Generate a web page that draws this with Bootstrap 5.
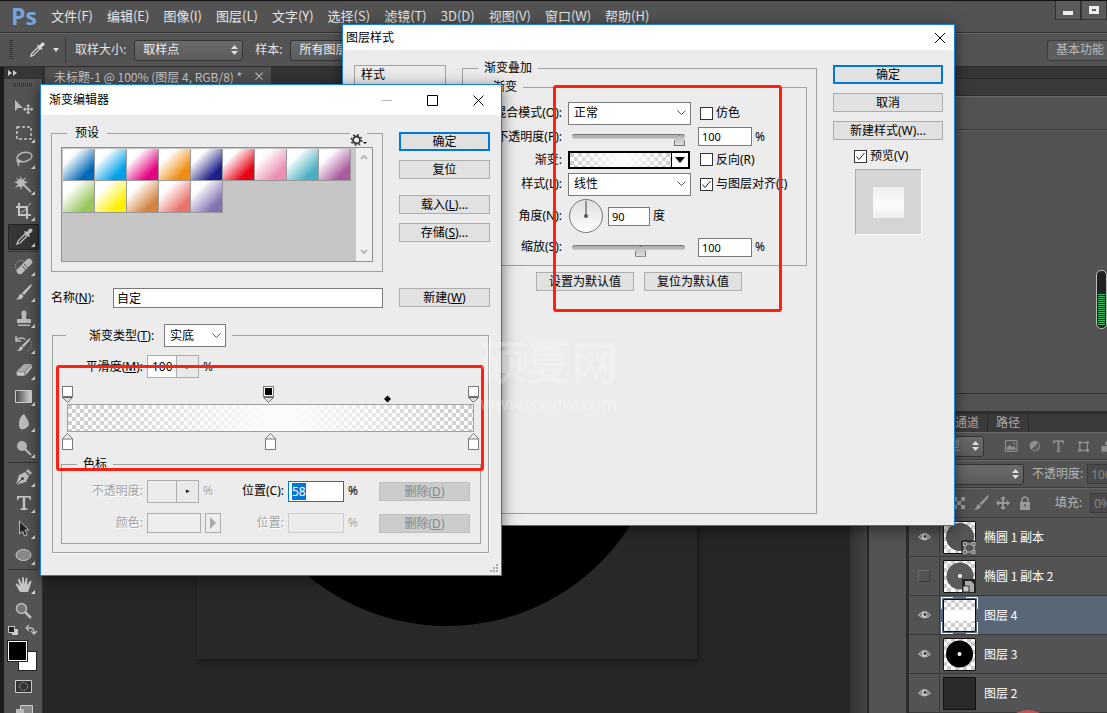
<!DOCTYPE html>
<html lang="zh-CN">
<head>
<meta charset="utf-8">
<meta name="viewport" content="width=device-width, initial-scale=1">
<title>Ps - 未标题-1</title>
<link href="https://cdn.jsdelivr.net/npm/bootstrap@5.3.0/dist/css/bootstrap.min.css" rel="stylesheet">
<style>
:root{--panel:#535353;--line:#383838;--lite:#686868;--win:#ececec;--etch:#a0a0a0;--blue:#0078d7}
body{font-family:"Noto Sans","Noto Sans CJK SC",sans-serif;font-size:12px;line-height:16px;color:#000;background:var(--panel)}
button,input,select{font:inherit;color:inherit}
.app{height:100vh;background:var(--panel);color:#e4e4e4}
.app svg{display:block;flex:none}
/* menu and options bars */
.menubar{height:33px;border-top:1px solid #111;border-bottom:1px solid #333;padding:0 0 2px 11px}
.logo{color:#78a5d8;font:bold 23px/28px "Open Sans",sans-serif;width:40px}
.menubar a{font:13px/18px "Noto Sans CJK SC",sans-serif;color:#e6e6e6;text-decoration:none}
.winbtns{align-self:flex-start}
.winbtns button{width:26px;height:19px;background:#5b5b5b;border:1px solid #333;border-top:0;padding:0}
.optbar{height:34px;border-top:1px solid var(--lite);border-bottom:1px solid #2e2e2e;padding-left:9px;background:var(--panel)}
.grip{width:4px;height:20px;background:repeating-linear-gradient(#333 0 1px,#5a5a5a 1px 2px)}
.dsel{appearance:none;height:21px;border:1px solid #333;border-radius:3px;padding:0 8px;line-height:18px;color:#f0f0f0;background:url("data:image/svg+xml,%3Csvg xmlns='http://www.w3.org/2000/svg' width='7' height='10'%3E%3Cpath d='M0 4 3.500 0 7 4zM0 6 3.500 10 7 6z' fill='%23ddd'/%3E%3C/svg%3E") no-repeat right 4px center,linear-gradient(#6b6b6b,#5b5b5b)}
.prow .dsel{color:#aaa}
.workspace{height:21px;width:60px;border:1px solid #3c3c3c;border-right:0;border-radius:3px 0 0 3px;background:#5d5d5d;color:#b8b8b8;padding:0 8px;white-space:nowrap;line-height:18px}
/* tool strip */
.tools{width:43px;border-left:4px solid #1c1c1c;border-right:1px solid #2c2c2c;background:var(--panel)}
.tools>header{height:12px;background:#363636;color:#ccc}
.tools .hgrip{width:20px;height:4px;margin:4px auto 7px;background:repeating-linear-gradient(90deg,#333 0 1px,#5a5a5a 1px 2px)}
.tool{position:relative;display:flex;align-items:center;justify-content:center;height:26px;width:31px;margin-left:4px;padding:0;border:0;background:none;color:#c4c4c4}
.tool.more::after{content:"";position:absolute;right:4px;bottom:3px;width:4px;height:4px;background:#ddd;clip-path:polygon(100% 0,100% 100%,0 100%)}
.tool.on{background:#353535;box-shadow:inset 0 0 0 1px #222;border-radius:2px}
.tools hr{height:1px;margin:1px 4px;background:#333;border:0;opacity:1}
.chips{height:32px;width:31px;display:grid;grid-template:10px 10px 10px/10px 9px 10px;margin-left:4px}
.fg{grid-area:1/1/3/3;background:#000;border:1px solid #fff;outline:1px solid #222;z-index:1}
.bg2{grid-area:2/2/4/4;background:#fff;border:1px solid #222}
/* document area */
.tabs{height:18px;background:#333}
.doctab{width:226px;height:18px;margin-left:2px;padding:0 6px 0 9px;background:#505050;color:#c8c8c8;font:12px/19px "Noto Sans CJK SC",sans-serif;white-space:nowrap}
.doctab button{border:0;padding:0;background:none;line-height:18px}
.stage{background:#262626;padding-top:74px;overflow:hidden}
.page{width:500px;height:500px;margin:0 auto;background:#282828;box-shadow:1px 2px 4px #151515}
.disc{width:434px;height:434px;border-radius:50%;background:#000}
.vscroll{width:19px;background:linear-gradient(90deg,#333,#444);border-right:2px solid #262626}
.dock{width:40px;border-right:3px solid #2c2c2c}
.panels{width:198px}
.panels .row1{height:12px;background:#353535;border-bottom:1px solid #292929}
.panels .row2{height:17px;background:#3a3a3a;border-bottom:1px solid #2c2c2c}
.panels .row3{height:34px;border-bottom:1px solid #3a3a3a;border-top:1px solid var(--lite)}
.panels .row4{height:264px;border-bottom:1px solid #333;border-top:1px solid #606060}
.meter{width:11px;height:59px;margin-top:139px;border:1px solid #bbb;border-radius:5px;padding:23px 1px 2px;background:#222}
.meter i{display:block;height:100%;background:repeating-linear-gradient(#3dbb6b 0 1px,#222 1px 2px)}
.panels .row5{height:20px;border-bottom:3px solid #2f2f2f}
.ptabs{height:18px;background:#3a3a3a;color:#aaa;padding-left:46px;line-height:18px}
.ptabs a{color:#aaa;text-decoration:none;padding:0 8px 0 0;margin-right:8px;border-right:1px solid #2c2c2c}
.prow{height:28px;border-top:1px solid var(--lite);border-bottom:1px solid #3d3d3d;white-space:nowrap;color:#b4b4b4;overflow:hidden}
.dnum{width:50px;height:20px;border:1px solid #3a3a3a;background:#4a4a4a;color:#858585;padding:0 3px}
.layer{height:39px;border-bottom:1px solid #383838;color:#fff}
.layer .eye{width:31px;border-right:1px solid #3b3b3b;color:#b8b8b8}
.layer.sel .nm{background:#596678}
.nm{padding-left:3px;font-family:"Noto Sans CJK SC",sans-serif}
.hidebox{width:12px;height:12px;border:1px solid #3c3c3c;border-top-color:#6a6a6a;border-left-color:#6a6a6a}
.redspot{left:1003px;top:710px;width:50px;height:50px;border-radius:50%;background:#c05656}
/* windows */
.win{position:absolute;border:1px solid #1a7fd6;background:var(--win);color:#000;box-shadow:0 3px 14px rgba(0,0,0,.55)}
.win svg{display:block}
.w1{left:342px;top:24px;width:613px;height:502px}
.w2{left:40px;top:84px;width:462px;height:492px}
.win .ttl{background:#fff;padding-left:3px}
.win .ttl button{border:0;background:none;padding:0}
.win fieldset{border:1px solid var(--etch);padding:0;margin:0;min-width:0}
.win legend{float:none;width:auto;font-size:12px;line-height:16px;margin:0 0 0 15px;padding:0 6px}
.wb{display:block;width:100%;height:19px;padding:0;border:1px solid #adadad;background:#e1e1e1;line-height:18px;text-align:center;white-space:nowrap}
.wb.def{border:2px solid var(--blue);line-height:16px}
.wb:disabled{background:#ccc;border-color:#bfbfbf;color:#858585}
.wsel{appearance:none;border:1px solid #7a7a7a;border-radius:0;background:#fff url("data:image/svg+xml,%3Csvg xmlns='http://www.w3.org/2000/svg' width='9' height='6'%3E%3Cpath d='M.5 .5 4.500 4.500 8.500 .5' fill='none' stroke='%23555'/%3E%3C/svg%3E") no-repeat right 4px center;height:23px;padding:0 5px;line-height:20px}
.wi{border:1px solid #7a7a7a;background:#fff;height:19px;padding:0 3px;border-radius:0;min-width:0;font-size:11px}
.wi:focus{outline:0}
.wi::selection{background:#0078d7;color:#fff}
.ck{appearance:none;flex:none;width:13px;height:13px;margin:0 3px 0 0;border:1px solid #333;background:#fff}
.ck:checked{background:#fff url("data:image/svg+xml,%3Csvg xmlns='http://www.w3.org/2000/svg' width='11' height='11'%3E%3Cpath d='M1.500 5.500 4 8.500 9.500 2' fill='none' stroke='%23222'/%3E%3C/svg%3E") center}
.cols{display:grid;grid-template-columns:92px minmax(0,1fr) 110px;gap:16px;padding:10px 11px}
.stylelist{border:1px solid var(--etch);margin-top:5px;padding:1px 6px}
.form1{display:grid;grid-template-columns:70px 123px 1fr;grid-template-rows:24px 23px 23px 26px 38px 24px;column-gap:6px;align-items:center;padding:6px 0;white-space:nowrap}
.form1>label,.form1>span:first-child{justify-self:end}
.third{display:flex;align-items:center;padding-left:3px}
.rng{appearance:none;width:113px;height:18px;margin:0 0 0 4px;background:none;display:block}
.rng::-webkit-slider-runnable-track{height:5px;border-radius:3px;background:#b4b4b4;border-top:1px solid #777;border-bottom:1px solid #ccc}
.rng::-webkit-slider-thumb{appearance:none;width:11px;height:11px;margin-top:0;background:linear-gradient(#bbb,#ddd) padding-box,#777;border:1px solid #777;clip-path:polygon(50% 0,100% 55%,100% 100%,0 100%,0 55%)}
.checker{background:linear-gradient(90deg,rgba(253,250,252,0),rgba(253,250,252,1) 50%,rgba(253,250,252,1) 55%,rgba(253,250,252,0)),repeating-conic-gradient(#fff 0 25%,#ccc 0 50%) 0 0/8px 8px}
.grad{width:122px;height:18px;border:2px solid #000;padding:0;display:flex}
.grad .checker{flex:1}
.grad b{width:17px;border-left:1px solid #000;background:#fff;display:flex;align-items:center;justify-content:center}
.pv{width:67px;height:66px;margin:5px 0 0 22px;border:1px solid #aaa;border-bottom-color:#fff;border-right-color:#fafafa;background:#d5d5d5}
.pv i{width:31px;height:31px;background:linear-gradient(#efefef,#fcfafc 60%,#eee)}
.redbox{position:absolute;border:3px solid #ff2012;border-radius:3px;pointer-events:none}
.r1{left:553px;top:85px;width:229px;height:227px}
.r2{left:56px;top:365px;width:428px;height:106px}
.body2{display:grid;grid-template-columns:332px 91px;column-gap:16px;padding:10px 10px 0}
.swlist{margin:6px 9px 9px;height:115px;border:1px solid #919191;background:#c6c6c6}
.sw{display:grid;grid-template-columns:repeat(9,32px);grid-auto-rows:32px;align-content:start;flex:1;padding:1px 0 0 1px}
.sw button{border:solid #999;border-width:0 1px 1px 0;padding:0;background:linear-gradient(135deg,#fff 25%,var(--c) 78%)}
.vs{width:16px;background:#f0f0f0;padding:6px 0}
.win .etched{grid-column:1/3;margin:16px 0 0 1px;width:437px;height:229px;box-shadow:1px 1px 0 #fff}
.line{display:grid;align-items:center;white-space:nowrap}
.spin{display:flex;width:52px;height:23px;border:1px solid #adadad;background:#f0f0f0}
.spin input{width:29px;border:0;border-right:1px solid #adadad;padding:0 4px;background:#fff;font-size:12px}
.spin button{flex:1;border:0;background:#e9e9e9;padding:0;font-size:7px;line-height:8px}
.dim{color:#a3a3a3;text-shadow:1px 1px 0 #fff}
.stops{margin:8px 9px 0}
.bar{height:28px;border:1px solid var(--etch);margin:1px 5px}
.wm{left:480px;top:333px;width:152px;color:rgba(255,255,255,.22);pointer-events:none}
.wm b{display:block;font:bold 46px/52px "Noto Sans CJK SC",sans-serif}
.wm span{display:block;margin-top:7px;font:bold 17px/24px "Open Sans",sans-serif}
</style>
</head>
<body class="overflow-hidden">
<svg class="d-none">
  <symbol id="eye" viewBox="0 0 13 10"><path d="M.5 5Q6.500-2 12.500 5 6.500 11 .5 5z" fill="#777" stroke="#bbb"/><circle cx="6.500" cy="4.800" r="2.800" fill="#ccc"/><circle cx="7" cy="4.500" r="1.400" fill="#333"/></symbol>
  <symbol id="dropper" viewBox="0 0 18 18"><path d="M2 16 3 13 10 6 12 8 5 15z" fill="none" stroke="currentColor" stroke-width="1.300"/><path d="m9 4 1-1 2 1 2-3q2-1 3 0t0 3l-3 2 1 2-1 1z" fill="currentColor"/></symbol>
  <symbol id="brush" viewBox="0 0 18 18"><path d="M17 1 16 4 9 12 7 10 15 2zM6 10.500 8.500 13Q7 17 1 16.500 4 15 4 12.500z" fill="currentColor"/></symbol>
  <symbol id="move4" viewBox="0 0 14 14"><path d="m7 0 3 3H8v3h3V4l3 3-3 3V8H8v3h2l-3 3-3-3h2V8H3v2L0 7l3-3v2h3V3H4z" fill="currentColor"/></symbol>
  <symbol id="top-stop" viewBox="0 0 11 17"><path d="M.5.5h10v11l-5 5-5-5z" fill="#ddd" stroke="#777"/><path d="M.5.5h10v10H.5z" fill="#fff" stroke="#777"/><path d="M1 11.500h9" stroke="#666"/></symbol>
  <symbol id="bot-stop" viewBox="0 0 11 17"><path d="m5.500.5 5 5v11H.5v-11z" fill="#eee" stroke="#777"/><path d="M.5 6h10v10.500H.5z" fill="#fff" stroke="#777"/></symbol>
</svg>
<div class="app d-flex flex-column position-relative overflow-hidden">
  <nav class="menubar d-flex align-items-center flex-shrink-0">
    <span class="logo">Ps</span>
    <div class="d-flex flex-grow-1" style="gap:14px">
      <a href="#">文件(F)</a><a href="#">编辑(E)</a><a href="#">图像(I)</a><a href="#">图层(L)</a><a href="#">文字(Y)</a><a href="#">选择(S)</a><a href="#">滤镜(T)</a><a href="#">3D(D)</a><a href="#">视图(V)</a><a href="#">窗口(W)</a><a href="#">帮助(H)</a>
    </div>
    <div class="winbtns d-flex flex-shrink-0">
      <button aria-label="最小化"><svg class="mx-auto" width="10" height="10"><path d="M0 6h10v4H0z" fill="#eee"/></svg></button>
      <button aria-label="最大化"><svg class="mx-auto" width="10" height="9"><path d="M1.500 1.500h7v5h-7z" fill="none" stroke="#eee" stroke-width="3"/></svg></button>
    </div>
  </nav>
  <div class="optbar d-flex align-items-center flex-shrink-0">
    <span class="grip"></span>
    <svg class="ms-3" width="16" height="16" style="color:#ddd"><use href="#dropper"/></svg>
    <svg class="ms-2" width="14" height="26"><path d="M0 11h6l-3 4z" fill="#ddd"/><path d="M12.500 0v26" stroke="#3a3a3a"/></svg>
    <label class="ms-2 me-2 flex-shrink-0" for="ss">取样大小:</label>
    <select id="ss" class="dsel" style="width:109px"><option>取样点</option></select>
    <label class="ms-2 ps-1 me-2 flex-shrink-0" for="sp">样本:</label>
    <select id="sp" class="dsel" style="width:109px"><option>所有图层</option></select>
    <button class="workspace ms-auto">基本功能</button>
  </div>
  <div class="d-flex flex-grow-1 overflow-hidden">
    <aside class="tools flex-shrink-0">
      <header><svg class="ms-1" width="9" height="10"><path d="M0 3l4 3-4 3zM5 3l4 3-4 3z" fill="#ccc"/></svg></header>
      <div class="hgrip"></div>
      <button class="tool" aria-label="移动"><svg width="20" height="16" viewBox="0 0 20 16"><path d="M1 1v11l3-3h5z" fill="#bbb"/><g transform="translate(9 5) scale(.75)"><use href="#move4" width="14" height="14"/></g></svg></button>
      <button class="tool more" aria-label="选框"><svg width="16" height="14"><path d="M1 1h14v12H1z" fill="none" stroke="#ccc" stroke-width="1.500" stroke-dasharray="3 2"/></svg></button>
      <button class="tool more" aria-label="套索"><svg width="18" height="16" fill="none" stroke="#bbb" stroke-width="1.500"><ellipse cx="9.500" cy="6" rx="7.500" ry="4.500" transform="rotate(-12 9.500 6)"/><path d="M3 8q-2 3 1 3t0-2q-2 1 0 6"/></svg></button>
      <button class="tool more" aria-label="魔棒"><svg width="19" height="18"><path d="M7 0 8 4 12 1 10 5 14 6 10 8 12 11 8 10 7 14 5.500 10 1 12 4 8 0 6 4 5 2 1 5.500 4z" fill="#bbb"/><path d="m9 8 8 8" stroke="#bbb" stroke-width="2"/></svg></button>
      <button class="tool more" aria-label="裁剪"><svg width="17" height="17" fill="none" stroke="#c8c8c8" stroke-width="2"><path d="M4 0v12h12M1 4h11v12"/><path d="M13 3l3-3M6 10l6-5" stroke-width="1"/></svg></button>
      <button class="tool more on" aria-label="吸管"><svg width="18" height="18"><use href="#dropper"/></svg></button>
      <hr>
      <button class="tool more" aria-label="修复"><svg width="20" height="18"><circle cx="7" cy="9" r="5.500" fill="none" stroke="#bbb" stroke-dasharray="1 1.500"/><path d="m6 14 9-9" stroke="#bbb" stroke-width="6.500" stroke-linecap="round"/><path d="m8 9 4 4M10 7l4 4" stroke="#555"/></svg></button>
      <button class="tool more" aria-label="画笔"><svg width="18" height="18"><use href="#brush"/></svg></button>
      <button class="tool more" aria-label="图章"><svg width="16" height="17"><path d="M6 7Q4 1 8 .5 12 1 10 7l.5 2H15v4H1V9h4.500zM2 14.500h12V16H2z" fill="#bbb"/></svg></button>
      <button class="tool more" aria-label="历史记录"><svg width="18" height="17"><g transform="translate(1 1) scale(.85)"><use href="#brush" width="18" height="18"/></g><path d="M1.500 3.500q5-3 9 0M1 0v5h5" fill="none" stroke="#bbb" stroke-width="1.500"/><path d="M16.500 5q1 8-5 10" stroke="#bbb" fill="none" stroke-dasharray="1 1.500"/></svg></button>
      <button class="tool more" aria-label="橡皮擦"><svg width="18" height="14"><path d="m1 9 8-8h8L10 9z" fill="#aaa"/><path d="m1 9 9 0v4H2zM10 9l7-8v4l-7 8z" fill="#ccc" stroke="#555" stroke-width=".5"/></svg></button>
      <button class="tool more" aria-label="渐变"><svg width="17" height="13"><defs><linearGradient id="gg"><stop stop-color="#444"/><stop offset="1" stop-color="#ddd"/></linearGradient></defs><path d="M.5.5h16v12H.5z" fill="url(#gg)" stroke="#ccc"/></svg></button>
      <button class="tool more" aria-label="模糊"><svg width="12" height="16"><path d="M6 0q5 7 5 10t-5 5-5-5 5-10z" fill="#bbb"/></svg></button>
      <button class="tool more" aria-label="减淡"><svg width="16" height="16"><circle cx="6" cy="6" r="5" fill="#b5b5b5"/><path d="m9 9 6 6" stroke="#bbb" stroke-width="2"/></svg></button>
      <hr>
      <button class="tool more" aria-label="钢笔"><svg width="18" height="18"><path d="M1 17 4 7l6-3 4 4-3 6zM11 3l2-2 4 4-2 2z" fill="#bbb"/><path d="m1 17 6-6" stroke="#444"/><circle cx="7.500" cy="10.500" r="1.500" fill="#444"/></svg></button>
      <button class="tool more" aria-label="文字"><svg width="14" height="14"><path d="M0 0h14v4h-1q0-2.500-3-2.500H8.200V12l2.300.8V14h-7v-1.200l2.300-.8V1.500H4Q1 1.500 1 4H0z" fill="#c4c4c4"/></svg></button>
      <button class="tool more" aria-label="路径选择"><svg width="12" height="18"><path d="M1.500 1v13l3-3 2 5 2.500-1-2-5h4z" fill="#222" stroke="#bbb"/></svg></button>
      <button class="tool more" aria-label="椭圆"><svg width="17" height="14"><ellipse cx="8.500" cy="7" rx="7.500" ry="5.500" fill="#8a8a8a" stroke="#ccc"/></svg></button>
      <hr>
      <button class="tool more" aria-label="抓手"><svg width="18" height="17"><path d="M5 16 1 9q-1-2 1-1.500L5 10 3 4q0-2 1.500-1L7 8V2q1-2 2 0v6l2-6q1.500-1 1.500 1L12 9l3-4q2-1 1.500 1L13 16z" fill="#c4c4c4"/></svg></button>
      <button class="tool" aria-label="缩放"><svg width="17" height="17"><circle cx="6.500" cy="6.500" r="5" fill="#777" stroke="#bbb" stroke-width="1.500"/><path d="m10 10 6 6" stroke="#bbb" stroke-width="2.500"/></svg></button>
      <svg class="ms-1" width="31" height="18"><path d="M4 6h6v6H4z" fill="#ccc"/><path d="M.5 3.500h6v6h-6z" fill="#222" stroke="#ccc"/><path d="M19 5h4q3 0 3 5M21 2l-3 3 3 3M23 8l3 3 3-3" fill="none" stroke="#bbb" stroke-width="1.300"/></svg>
      <div class="chips"><span class="fg"></span><span class="bg2"></span></div>
      <button class="tool" aria-label="快速蒙版"><svg width="17" height="13"><path d="M.5.5h16v12H.5z" fill="#333" stroke="#ccc"/><circle cx="8.500" cy="6.500" r="4" fill="none" stroke="#ddd" stroke-dasharray="1 1.200"/></svg></button>
      <button class="tool" aria-label="屏幕模式"><svg width="18" height="14"><path d="M5.500.5h12v12h-12z" fill="#888" stroke="#ccc"/><path d="M1 4h8v8H1z" fill="#bbb"/></svg></button>
    </aside>
    <main class="d-flex flex-column flex-grow-1 overflow-hidden">
      <div class="tabs flex-shrink-0"><div class="doctab d-flex justify-content-between"><span>未标题-1 @ 100% (图层 4, RGB/8) *</span><button aria-label="关闭">×</button></div></div>
      <div class="d-flex flex-grow-1 overflow-hidden">
        <div class="stage flex-grow-1"><div class="page d-flex align-items-center justify-content-center"><div class="disc"></div></div></div>
        <div class="vscroll flex-shrink-0"></div>
      </div>
    </main>
    <div class="dock flex-shrink-0"></div>
    <aside class="panels flex-shrink-0">
      <div class="row1"></div><div class="row2"></div><div class="row3"></div>
      <div class="row4 d-flex justify-content-end"><div class="meter"><i></i></div></div>
      <div class="row5"></div>
      <div class="ptabs"><a href="#">通道</a><a href="#">路径</a></div>
      <div class="prow d-flex align-items-center">
        <select class="dsel flex-shrink-0" style="width:75px;text-indent:18px" aria-label="筛选类型"><option>类型</option></select>
        <svg class="ms-3 ps-1" width="115" height="16" viewBox="0 0 115 16" fill="#8f8f8f" stroke="none"><path d="M1.500 2.500h12v11h-12z" fill="none" stroke="#999"/><path d="M3 12v-3l3-2 2 2 2-1 2 2v2z"/><circle cx="10.500" cy="5.500" r="1"/><circle cx="32" cy="8" r="5.500"/><path d="m28 12 8-8q2 4-1 7t-7 1z" fill="#5c5c5c"/><path d="M51 2h11v4h-1q0-2.500-2-2.500h-1.500V13h1.500v1h-5v-1h1.500V3.500H54q-2 0-2 2.500h-1z"/><path d="M78.500 4.500h8v8h-8z" fill="none" stroke="#999"/><path d="M77 3h3v3h-3zM85 3h3v3h-3zM77 11h3v3h-3zM85 11h3v3h-3zM101 8h7v6h-7zM105 3h8v4h-8z"/></svg>
      </div>
      <div class="prow d-flex align-items-center">
        <select class="dsel flex-shrink-0" style="width:115px" aria-label="混合模式"><option>正常</option></select>
        <label class="ms-2 me-1" for="op">不透明度:</label><input id="op" class="dnum" value="100%">
      </div>
      <div class="prow d-flex align-items-center" style="height:30px">
        <svg width="134" height="18" viewBox="0 0 134 18" fill="#999"><path d="M44 3h4v4h-4zM52 3h4v4h-4zM48 7h4v4h-4zM44 11h4v4h-4zM52 11h4v4h-4z"/><g style="color:#999"><use href="#brush" x="64" width="17" height="17"/><use href="#move4" x="87" y="2" width="14" height="14"/></g><path d="M111 8h10v8h-10z"/><path d="M113 8V5q3-4 6 0v3" fill="none" stroke="#999" stroke-width="1.500"/><path d="M115.500 10h1v3h-1z" fill="#444"/></svg>
        <label class="ms-2 ps-1 me-1 flex-shrink-0" for="fl">填充:</label><input id="fl" class="dnum ms-1" value="0%">
      </div>
      <div class="layer d-flex"><span class="eye d-flex align-items-center justify-content-center flex-shrink-0"><svg width="13" height="10"><use href="#eye"/></svg></span><span class="nm d-flex align-items-center flex-grow-1"><svg class="me-2" width="33" height="33"><rect width="33" height="33" fill="url(#ckr)"/><circle cx="17" cy="16" r="14" fill="#555"/><path d="M19 33V20h14v13z" fill="#555"/><path d="M19 33V20h14" fill="none" stroke="#111"/><path d="M.5.5h32v19M.5 0v32.500H19" fill="none" stroke="#111"/><path d="M22 23h9v8h-9z" fill="none" stroke="#bbb"/><path d="M20.500 21.500h3v3h-3zM29 21.500h3v3h-3zM20.500 29.500h3v3h-3zM29 29.500h3v3h-3z" fill="#555" stroke="#bbb"/></svg>椭圆 1 副本</span></div>
      <div class="layer d-flex"><span class="eye d-flex align-items-center justify-content-center flex-shrink-0"><span class="hidebox"></span></span><span class="nm d-flex align-items-center flex-grow-1"><svg class="me-2" width="33" height="33"><rect width="33" height="33" fill="url(#ckr)"/><circle cx="17" cy="16" r="13.500" fill="#5a5a5a"/><circle cx="17" cy="16" r="2" fill="#fff"/><path d="M.5.5h32v32H.5z" fill="none" stroke="#111"/><path d="M19 33V19h14v14z" fill="#222"/><path d="M22 21h6l3 3v8h-5v-4h-4z" fill="#aaa"/><path d="M20 26h6v6h-6z" fill="#ccc" stroke="#333"/></svg>椭圆 1 副本 2</span></div>
      <div class="layer sel d-flex"><span class="eye d-flex align-items-center justify-content-center flex-shrink-0"><svg width="13" height="10"><use href="#eye"/></svg></span><span class="nm d-flex align-items-center flex-grow-1"><svg class="me-2 overflow-visible" width="33" height="33"><rect width="33" height="33" fill="url(#ckr)"/><path d="M1 11h31v11H1z" fill="#fff"/><path d="M.5.5h32v32H.5z" fill="none" stroke="#111"/><path d="M-1.500 10V-1.500H10M23-1.500H34.500V10M34.500 23V34.500H23M10 34.500H-1.500V23" fill="none" stroke="#fff"/></svg>图层 4</span></div>
      <div class="layer d-flex"><span class="eye d-flex align-items-center justify-content-center flex-shrink-0"><svg width="13" height="10"><use href="#eye"/></svg></span><span class="nm d-flex align-items-center flex-grow-1"><svg class="me-2" width="33" height="33"><rect width="33" height="33" fill="url(#ckr)"/><circle cx="16.500" cy="16" r="13.500"/><circle cx="16.500" cy="16" r="2" fill="#fff"/><path d="M.5.5h32v32H.5z" fill="none" stroke="#111"/></svg>图层 3</span></div>
      <div class="layer d-flex"><span class="eye d-flex align-items-center justify-content-center flex-shrink-0"><svg width="13" height="10"><use href="#eye"/></svg></span><span class="nm d-flex align-items-center flex-grow-1"><svg class="me-2" width="33" height="33"><path d="M.5.5h32v32H.5z" fill="#2a2a2a" stroke="#111"/></svg>图层 2</span></div>
    </aside>
  </div>
  <svg width="0" height="0" class="position-absolute"><defs><pattern id="ckr" width="8" height="8" patternUnits="userSpaceOnUse"><path d="M0 0h8v8H0z" fill="#fff"/><path d="M0 0h4v4H0zM4 4h4v4H4z" fill="#ccc"/></pattern></defs></svg>
  <div class="redspot position-absolute"></div>

  <section class="win w1">
    <div class="ttl d-flex justify-content-between align-items-center" style="height:25px"><span>图层样式</span><button class="me-2" aria-label="关闭"><svg width="12" height="12"><path d="m1 1 10 10M11 1 1 11" stroke="#000"/></svg></button></div>
    <div class="cols">
      <div class="stylelist" style="height:446px">样式</div>
      <fieldset class="pe-2" style="height:454px"><legend>渐变叠加</legend>
        <fieldset style="margin:3px 1px 0 28px"><legend style="margin-left:-5px">渐变</legend>
          <div class="form1">
            <label for="bm">混合模式(O):</label><select id="bm" class="wsel"><option>正常</option></select><label class="third w-100"><input type="checkbox" class="ck">仿色</label>
            <label for="o1">不透明度(P):</label><input id="o1" type="range" class="rng" value="100"><span class="third"><input class="wi" style="width:54px;margin-left:-2px" value="100" aria-label="不透明度">&nbsp;%</span>
            <span class="text-end">渐变:</span><button class="grad" aria-label="渐变"><span class="checker"></span><b><svg width="10" height="6"><path d="M0 0h10L5 6z"/></svg></b></button><label class="third w-100"><input type="checkbox" class="ck">反向(R)</label>
            <label for="sl">样式(L):</label><select id="sl" class="wsel"><option>线性</option></select><label class="third w-100"><input type="checkbox" class="ck" checked>与图层对齐(I)</label>
            <label for="an">角度(N):</label><span class="d-flex align-items-center"><svg class="me-1 ms-0 flex-shrink-0" width="36" height="36"><defs><linearGradient id="dl" x2="0" y2="1"><stop stop-color="#ddd"/><stop offset="1" stop-color="#fff"/></linearGradient></defs><circle cx="18" cy="18" r="16.500" fill="url(#dl)" stroke="#777"/><path d="M18 3v15" stroke="#777" stroke-width="1.500"/><circle cx="18" cy="18" r="2" fill="#555"/></svg><input id="an" class="wi" style="width:42px" value="90">&nbsp;度</span><span></span>
            <label for="s1">缩放(S):</label><input id="s1" type="range" class="rng" value="62"><span class="third"><input class="wi" style="width:54px;margin-left:-2px" value="100" aria-label="缩放">&nbsp;%</span>
          </div>
        </fieldset>
        <div class="d-flex" style="gap:10px;margin:6px 0 0 73px"><button class="wb" style="width:98px">设置为默认值</button><button class="wb" style="width:98px">复位为默认值</button></div>
      </fieldset>
      <div style="padding-top:5px">
        <button class="wb def">确定</button><button class="wb" style="margin-top:9px">取消</button><button class="wb" style="margin-top:9px">新建样式(W)...</button>
        <label class="d-flex align-items-center mt-2" style="padding-left:21px"><input type="checkbox" class="ck" checked>预览(V)</label>
        <div class="pv d-flex align-items-center justify-content-center"><i></i></div>
      </div>
    </div>
  </section>
  <div class="redbox r1"></div>

  <section class="win w2">
    <div class="ttl d-flex align-items-center ps-2" style="height:30px"><span class="me-auto">渐变编辑器</span>
      <button aria-label="最小化"><svg width="11" height="12"><path d="M0 6.500h10" stroke="#bbb"/></svg></button>
      <button aria-label="最大化" style="margin:0 35px 0 34px"><svg width="11" height="11"><path d="M.5.5h10v10H.5z" fill="none" stroke="#000"/></svg></button>
      <button aria-label="关闭" style="margin-right:17px"><svg width="11" height="11"><path d="m.5.5 10 10M10.500.5l-10 10" stroke="#000"/></svg></button></div>
    <div class="body2">
      <fieldset class="position-relative"><legend class="px-2">预设</legend>
        <svg class="position-absolute" style="right:15px;top:-8px;background:#ececec" width="17" height="14"><circle cx="6.500" cy="7" r="3.500" fill="none" stroke="#333" stroke-width="1.800"/><circle cx="6.500" cy="7" r="5.200" fill="none" stroke="#333" stroke-width="1.600" stroke-dasharray="1.800 2.280"/><path d="M13 9h4l-2 2z"/></svg>
        <div class="swlist d-flex">
          <div class="sw">
            <button style="--c:#0068b7" aria-label="蓝"></button><button style="--c:#00a0e9" aria-label="青"></button><button style="--c:#e4007f" aria-label="洋红"></button><button style="--c:#f08c0f" aria-label="橙"></button><button style="--c:#1d2088" aria-label="深蓝"></button><button style="--c:#e60012" aria-label="红"></button><button style="--c:#ec8fb4" aria-label="粉"></button><button style="--c:#4aafc2" aria-label="浅青"></button><button style="--c:#aa5a9e" aria-label="紫"></button>
            <button style="--c:#98c75c" aria-label="绿"></button><button style="--c:#fff100" aria-label="黄"></button><button style="--c:#d58240" aria-label="棕"></button><button style="--c:#e9746b" aria-label="浅红"></button><button style="--c:#8272b1" aria-label="浅紫"></button>
          </div>
          <div class="vs d-flex flex-column justify-content-between align-items-center"><svg width="8" height="6"><path d="m1 5 3-3 3 3" fill="none" stroke="#bbb" stroke-width="2"/></svg><svg width="8" height="6"><path d="m1 1 3 3 3-3" fill="none" stroke="#bbb" stroke-width="2"/></svg></div>
        </div>
      </fieldset>
      <div style="padding-top:7px"><button class="wb def">确定</button><button class="wb" style="margin-top:9px">复位</button><button class="wb mt-3">载入(<u>L</u>)...</button><button class="wb" style="margin-top:9px">存储(<u>S</u>)...</button></div>
      <div class="d-flex align-items-center mt-3"><label for="nm" style="width:62px">名称(<u>N</u>):</label><input id="nm" class="wi flex-grow-1" style="height:20px;font-size:12px" value="自定"></div>
      <button class="wb mt-3">新建(<u>W</u>)</button>
      <fieldset class="etched"><legend class="d-flex align-items-center" style="margin-left:13px;padding-left:23px"><label style="width:75px" for="gt">渐变类型(<u>T</u>):</label><select id="gt" class="wsel" style="width:62px"><option>实底</option></select></legend>
        <div class="line" style="grid-template-columns:90px 52px auto;column-gap:4px;margin-top:8px"><label class="text-end" for="sm">平滑度(<u>M</u>):</label><span class="spin"><input id="sm" value="100"><button aria-label="调整">▸</button></span><span>%</span></div>
        <div class="stops">
          <div class="d-flex" style="height:17px">
            <svg width="11" height="17"><use href="#top-stop"/></svg>
            <svg style="margin-left:190px" width="11" height="17"><use href="#top-stop"/><path d="M2 2h7v7H2z"/></svg>
            <svg style="margin-left:110px" width="7" height="17"><path d="m3.500 9.500 3.500 3.500-3.500 3.500L0 13z"/></svg>
            <svg class="ms-auto" width="11" height="17"><use href="#top-stop"/></svg>
          </div>
          <div class="bar checker"></div>
          <div class="d-flex justify-content-between"><svg width="11" height="17"><use href="#bot-stop"/></svg><svg width="11" height="17"><use href="#bot-stop"/></svg><svg width="11" height="17"><use href="#bot-stop"/></svg></div>
        </div>
        <fieldset style="margin:6px 7px 0 8px;height:88px"><legend>色标</legend>
          <div class="line" style="grid-template-columns:81px 83px 50px 56px 27px 91px;grid-template-rows:32px 32px;column-gap:4px;padding-top:3px">
            <span class="text-end dim">不透明度:</span><span class="d-flex align-items-center"><span class="spin"><input disabled style="background:#ececec" aria-label="不透明度"><button aria-label="调整">▸</button></span><span class="dim ms-1">%</span></span>
            <label class="text-end" for="ps">位置(C):</label><input id="ps" class="wi" style="height:21px;border-color:#0078d7;font-size:12px" value="58"><span>%</span><button class="wb" disabled>删除(<u>D</u>)</button>
            <span class="text-end dim">颜色:</span><span class="d-flex gap-1"><button disabled style="width:54px;height:20px;border:1px solid #adadad" aria-label="颜色"></button><button class="p-0" disabled style="width:16px;height:20px;border:1px solid #adadad" aria-label="选择颜色"><svg class="mx-auto" width="7" height="12"><path d="m0 0 6 6-6 6z" fill="#aaa"/></svg></button></span>
            <span class="text-end dim">位置:</span><input class="wi" disabled style="height:20px;background:#ececec;border-color:#ccc" aria-label="位置"><span class="dim">%</span><button class="wb" disabled>删除(<u>D</u>)</button>
          </div>
        </fieldset>
      </fieldset>
    </div>
    <svg class="position-absolute bottom-0 end-0" width="12" height="12"><path d="M7 1h2v2H7zM4 4h2v2H4zM7 4h2v2H7zM1 7h2v2H1zM4 7h2v2H4zM7 7h2v2H7z" fill="#aaa"/></svg>
  </section>
  <div class="redbox r2"></div>
  <div class="wm position-absolute"><b>硕夏网</b><span>www.sxiaw.com</span></div>
</div>
<script src="https://cdn.jsdelivr.net/npm/bootstrap@5.3.0/dist/js/bootstrap.bundle.min.js"></script>
<script>
const pos = document.getElementById('ps');
pos.focus();
pos.select();
</script>
</body>
</html>
